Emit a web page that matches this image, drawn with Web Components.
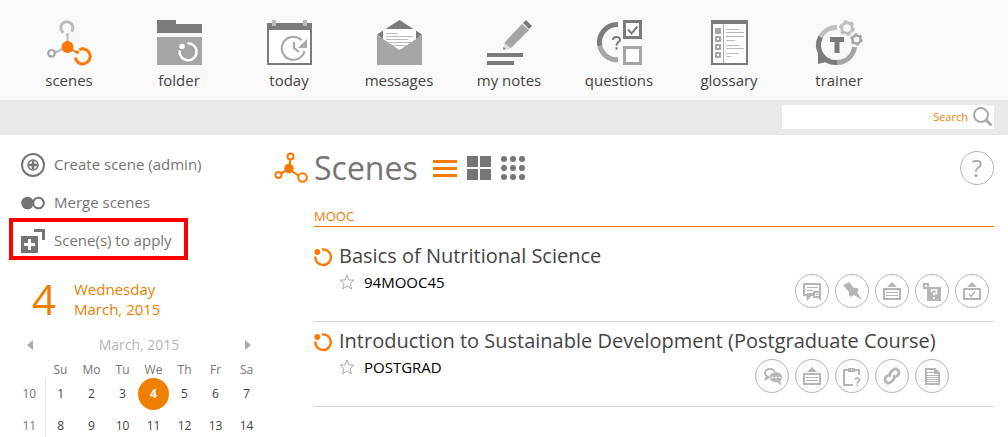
<!DOCTYPE html>
<html lang="en">
<head>
<meta charset="utf-8">
<title>Scenes</title>
<style>
  html { height: 100%; overflow: hidden; }
  body { margin: 0; min-height: 100%; background: #fff; font-family: "Open Sans", "Noto Sans", sans-serif; font-size: 15px; line-height: 20px; color: #444;
    --orange: #ee7f00; --bright: #ff7800; --grey: #757575; --pale: #b5b5b5; }
</style>
</head>
<body>
<scene-app></scene-app>
<script>
const ring = 'fill="none" stroke="#fff"';
const ICONS = {
  scenes: [44, 45, `<g fill="none"><path d="M16.5 12.7A6 6 0 1 1 24.5 11.5" stroke="#bdbdbd" stroke-width="3"/><path d="M20.5 14v8M16 29l-8 3.5" stroke="#bdbdbd" stroke-width="2"/><circle cx="4.5" cy="33.3" r="3.3" stroke="#a6a6a6" stroke-width="2.2"/><path d="M32.3 29.7A7.5 7.5 0 1 1 28.3 37.5" stroke="#ff7800" stroke-width="3"/><path d="M22 28l8 4.5" stroke="#ff7800" stroke-width="2"/></g><circle cx="20.5" cy="14.5" r="1.5" fill="#bdbdbd"/><circle cx="8.5" cy="32" r="1.3" fill="#a6a6a6"/><circle cx="20.5" cy="27" r="6" fill="#ff7800"/><circle cx="30.3" cy="32.3" r="1.8" fill="#ff7800"/>`],
  folder: [44, 45, `<path d="M0 0h19v4h26v9H0z" fill="#7b7b7b"/><path d="M0 17h45v28H0z" fill="#a5a5a5"/><path d="M30.5 23.3A8.5 8.5 0 1 1 22.6 30.5" ${ring} stroke-width="2.5"/><circle cx="25" cy="26.5" r="2.8" fill="#fff"/>`],
  today: [44, 45, `<path d="M1 4h43v40H1z" fill="#fff" stroke="#7b7b7b" stroke-width="2"/><path d="M0 3h45v7H0z" fill="#7b7b7b"/><path d="M5 0h4v6H5zM36 0h4v6h-4z" fill="#bbb"/><path d="M37.5 31A11.5 11.5 0 1 1 34.5 20.2M27 22v6l5 4" fill="none" stroke="#aaa" stroke-width="2.2"/><path d="M40 19v9h-9z" fill="#aaa"/>`],
  messages: [44, 45, `<path d="M22.5 0L45 14.5 38 20H7L0 14.5z" fill="#7b7b7b"/><path d="M6 9h33v21H6z" fill="#fff"/><path d="M0 15l22.5 15L45 15v30H0z" fill="#a5a5a5"/><path d="M9 13.5h12M9 16.5h27M9 19.5h22M11 22.5h24M15 25.5h16" stroke="#bbb"/>`],
  notes: [44, 45, `<path d="M0 33h36v4H0zM0 41h27v4H0z" fill="#7b7b7b"/><path d="M18 22L35 4l7 6-18 18-7 2z" fill="#a5a5a5"/><path d="M36 3l3-3 6 6-3 3z" fill="#7b7b7b"/><path d="M17.5 23l6 5-6.5 2z" fill="#ddd"/><path d="M16.500 27l2 2-2.500.5z" fill="#777"/>`],
  questions: [44, 45, `<path d="M21 4.5A18 18 0 0 0 2.8 26" fill="none" stroke="#7b7b7b" stroke-width="5"/><path d="M2.8 26A18 18 0 0 0 21 39.8" fill="none" stroke="#a5a5a5" stroke-width="5"/><path d="M16 20c0-4.200 7-4 7-.3 0 2.500-3.500 2.300-3.500 5.800M19.500 27.300v2.400" fill="none" stroke="#7b7b7b" stroke-width="2"/><path d="M27.5 1.5h16v16h-16z" fill="#fff" stroke="#7b7b7b" stroke-width="3"/><path d="M31 9.500l3.500 4 6-7" fill="none" stroke="#7b7b7b" stroke-width="2"/><path d="M27.5 27.5h16v16h-16z" fill="#fff" stroke="#a5a5a5" stroke-width="3"/>`],
  glossary: [44, 45, `<path d="M5 1h35v43H5z" fill="#fff" stroke="#7b7b7b" stroke-width="2"/><path d="M4 0h37v4H4z" fill="#7b7b7b"/><path d="M16.5 4v39" stroke="#aaa"/><path d="M8 8h6v6H8z" fill="#a5a5a5"/><path d="M9 17h4v4H9zM9 25h4v4H9zM9 33h4v4H9z" fill="none" stroke="#a5a5a5" stroke-width="2"/><path d="M19 9.5h13M19 12.5h18M19 16.5h18M19 20.5h9M19 25.5h13M19 28.5h18M19 33.5h13M19 36.5h5" stroke="#bbb"/>`],
  trainer: [44, 45, `<g fill="none" stroke-width="5"><path d="M20 7.5A17.5 17.5 0 0 0 3.5 17" stroke="#bfbfbf"/><path d="M3.5 17A17.5 17.5 0 0 0 20 42.5" stroke="#7b7b7b"/><path d="M20 42.5A17.5 17.5 0 0 0 37.5 27" stroke="#a5a5a5"/></g><path d="M1 32v12l12-3z" fill="#7b7b7b"/><path d="M13 17h14v5h-4.500v11h-5V22H13z" fill="#7b7b7b"/><circle cx="30" cy="8" r="5.300" fill="none" stroke="#bfbfbf" stroke-width="3"/><circle cx="30" cy="8" r="7" fill="none" stroke="#bfbfbf" stroke-width="2" stroke-dasharray="3.600 3.730"/><circle cx="39.5" cy="19.5" r="4" fill="none" stroke="#a5a5a5" stroke-width="2.400"/><circle cx="39.5" cy="19.5" r="5.500" fill="none" stroke="#a5a5a5" stroke-width="1.600" stroke-dasharray="2.900 2.860"/>`],
  search: [20, 20, `<circle cx="8" cy="8" r="7" fill="none" stroke="#aaa" stroke-width="2"/><path d="M12.5 12.5l6 6" stroke="#aaa" stroke-width="3"/>`],
  create: [24, 24, `<circle cx="12" cy="12" r="11" fill="none" stroke="#757575" stroke-width="2"/><circle cx="12" cy="12" r="5" fill="none" stroke="#757575" stroke-width="1.500"/><path d="M12 8v8M8 12h8" stroke="#757575" stroke-width="2.500"/>`],
  merge: [24, 24, `<circle cx="6.5" cy="12" r="6.300" fill="#757575"/><circle cx="17.5" cy="12" r="5.300" fill="#fff" stroke="#757575" stroke-width="2"/>`],
  apply: [24, 24, `<path d="M0 7h17v17H0zM13 0h11v11h-3V3h-8z" fill="#757575"/><path d="M8.5 10v11M3 15.500h11" stroke="#fff" stroke-width="3"/>`],
  logo: [34, 30, `<path d="M16 3v13M15 16L4 22M15 16l13 9" stroke="#ff7800" stroke-width="2"/><circle cx="15" cy="15.500" r="4.800" fill="#ff7800"/><g fill="#fff" stroke="#ff7800" stroke-width="2"><circle cx="16.500" cy="3.500" r="3"/><circle cx="4.500" cy="22" r="3"/><circle cx="28.500" cy="24.500" r="4.300"/></g>`],
  list: [24, 24, `<path d="M0 4h24v3H0zM0 11h24v3H0zM0 18h24v3H0z" fill="#ee7f00"/>`],
  grid: [24, 24, `<path d="M0 0h11v11H0zM13 0h11v11H13zM0 13h11v11H0zM13 13h11v11H13z" fill="#757575"/>`],
  dots: [24, 24, [3, 12, 21].map(y => [3, 12, 21].map(x => `<circle cx="${x}" cy="${y}" r="3" fill="#757575"/>`).join('')).join('')],
  status: [18, 18, `<path d="M8 1.500A7.800 7.800 0 1 1 1.300 8.500" fill="none" stroke="#ff7800" stroke-width="2.400"/><circle cx="3.300" cy="4" r="2.900" fill="#ff7800"/>`],
  star: [16, 16, `<path d="M8 1l1.900 5H15l-4 3.600 1.600 5.400L8 11.900 3.400 15 5 9.600 1 6h5.100z" fill="none" stroke="#aaa"/>`],
  prev: [6, 10, `<path d="M6 0v10L0 5z" fill="#aaa"/>`],
  next: [6, 10, `<path d="M0 0v10l6-5z" fill="#aaa"/>`],
  forum: [34, 34, `<path d="M25 17v-7H9v11h9" fill="none" stroke="#b5b5b5" stroke-width="2"/><path d="M12 13.500h11M12 16.500h6M12 19.500h6" stroke="#b5b5b5"/><path d="M11 21h6l-5 6zM22 23h4v4z" fill="#b5b5b5"/><path d="M19 18h6v5h-6z" fill="#fff" stroke="#b5b5b5" stroke-width="2"/><path d="M21 20.500h3" stroke="#b5b5b5"/>`],
  pin: [34, 34, `<path d="M8 11l6-3 5 6 3 0 2 2-2 2 5 8-8-5-3 2-2-2 0-3z" fill="#b5b5b5"/>`],
  board: [34, 34, `<path d="M9 15h16v10H9z" fill="none" stroke="#b5b5b5" stroke-width="2"/><path d="M11 18.500h12M11 21.500h12" stroke="#b5b5b5"/><path d="M12 13l5-5 5 5z" fill="#b5b5b5"/>`],
  quiz: [34, 34, `<path d="M12 13h14v14H12z" fill="#b5b5b5"/><path d="M9 10h4v4H9z" fill="#fff" stroke="#b5b5b5" stroke-width="2"/><path d="M16.500 18v-2h5v3.500H19v2M19 23v2" fill="none" stroke="#fff" stroke-width="1.600"/>`],
  check: [34, 34, `<path d="M9 15h16v10H9z" fill="none" stroke="#b5b5b5" stroke-width="2"/><path d="M14 20l2 2.500 4-5" fill="none" stroke="#b5b5b5" stroke-width="1.500"/><path d="M12 13l5-5 5 5z" fill="#b5b5b5"/>`],
  chat: [34, 34, `<ellipse cx="15" cy="14" rx="5" ry="4" fill="none" stroke="#b5b5b5" stroke-width="2"/><path d="M9 22l2-5 4 2z" fill="#b5b5b5"/><path d="M21 13c4 0 6.500 2.500 6.500 5 0 2-1 3.500-2 4l1.500 5-5-3.500c-5 0-7.500-2.500-7.500-5.500s3-5 6.500-5z" fill="#b5b5b5" stroke="#fff" stroke-width=".6"/><path d="M16.500 18.500h9" stroke="#fff" stroke-width="1.500" stroke-dasharray="2 1.500"/>`],
  task: [34, 34, `<path d="M18 26H9V11h15v5" fill="none" stroke="#b5b5b5" stroke-width="2"/><path d="M13 9h7v4h-7z" fill="#b5b5b5"/><path d="M16 10.500h1" stroke="#fff"/><path d="M20 20.500c.5-2 4.500-2 4.500.3 0 1.700-2.300 1.700-2.300 3.700M22.200 25.500v1.800" fill="none" stroke="#b5b5b5" stroke-width="1.700"/>`],
  link: [34, 34, `<g transform="rotate(-45 17 17)" fill="none" stroke="#b5b5b5" stroke-width="2.800"><path d="M15 13.500h-3a3.500 3.500 0 0 0 0 7h3.500a3.500 3.500 0 0 0 3.300-3"/><path d="M19 20.500h3a3.500 3.500 0 0 0 0-7h-3.500a3.500 3.500 0 0 0-3.300 3"/></g>`],
  page: [34, 34, `<path d="M11 10h9l4 4v11H11z" fill="#fff" stroke="#b5b5b5" stroke-width="2"/><path d="M19 9v6h6z" fill="#b5b5b5"/><path d="M12 13.500h7M12 16.500h11M12 18.500h11M12 20.500h11M12 22.500h11" stroke="#b5b5b5"/>`]
};
const root = (el, html) => { el.attachShadow({ mode: 'open' }).innerHTML = html; };
const attr = (el, name) => el.getAttribute(name) || '';

customElements.define('ui-icon', class extends HTMLElement {
  connectedCallback() {
    if (this.shadowRoot) return;
    const [w, h, art] = ICONS[attr(this, 'name')];
    root(this, `<style>:host{display:block;flex:none}svg{display:block;overflow:visible}</style>
      <svg width="${w}" height="${h}" viewBox="0 0 ${w} ${h}" aria-hidden="true">${art}</svg>`);
  }
});

customElements.define('nav-item', class extends HTMLElement {
  connectedCallback() {
    root(this, `<style>
      :host{display:block;width:110px}
      a{display:flex;flex-direction:column;align-items:center;gap:5px;color:inherit;text-decoration:none}
      </style><a href="#"><ui-icon name="${attr(this, 'icon')}"></ui-icon><span><slot></slot></span></a>`);
  }
});

customElements.define('search-bar', class extends HTMLElement {
  connectedCallback() {
    root(this, `<style>
      :host{display:flex;justify-content:flex-end;background:#e9e9e9;padding:5px 14px 6px}
      form{display:flex;align-items:center;gap:5px;box-sizing:border-box;width:212px;height:24px;background:#fff;padding-right:1px}
      input{flex:1;min-width:0;border:0;padding:0 0 0 6px;background:none;outline:0;text-align:right;font:11px/20px "Open Sans",sans-serif;color:var(--orange)}
      input::placeholder{color:var(--orange);opacity:1}
      button{border:0;padding:0;background:none}
      </style><form><input type="text" placeholder="Search" aria-label="Search"><button type="button" aria-label="Start search"><ui-icon name="search"></ui-icon></button></form>`);
  }
});

customElements.define('side-link', class extends HTMLElement {
  connectedCallback() {
    root(this, `<style>
      :host{display:flex;height:38px;color:var(--grey)}
      a{position:relative;display:flex;align-items:center;gap:9px;color:inherit;text-decoration:none}
      span{padding-bottom:2px}
      :host([marked]) a::before{content:"";position:absolute;inset:-4px -16px 0 -12px;border:4px solid #f00}
      </style><a href="#"><ui-icon name="${attr(this, 'icon')}"></ui-icon><span><slot></slot></span></a>`);
  }
});

customElements.define('month-calendar', class extends HTMLElement {
  connectedCallback() {
    const rows = [[10, 1, 2, 3, 4, 5, 6, 7], [11, 8, 9, 10, 11, 12, 13, 14]];
    root(this, `<style>
      :host{display:block;width:248px}
      .today{display:flex;align-items:center;gap:18px;padding-left:18px;color:var(--orange)}
      .day{font-size:42px;line-height:40px}
      .month{display:flex;justify-content:space-between;align-items:center;padding:0 11px 0 13px;margin-top:16px;color:var(--pale);font-size:14px}
      button{border:0;padding:0;background:none}
      table{table-layout:fixed;width:100%;border-collapse:collapse;margin-top:7px;font-size:12px;line-height:16px;text-align:center}
      th,td{padding:0;font-weight:400;height:32px}
      thead th,thead td{height:16px;color:var(--grey)}
      tbody th{color:var(--grey)}
      tbody td:nth-child(2){border-left:1px solid #e4e4e4}
      .now span{display:flex;align-items:center;justify-content:center;height:32px;border-radius:50%;background:var(--orange);color:#fff;font-weight:700}
      </style>
      <div class="today"><span class="day">4</span><span>Wednesday<br>March, 2015</span></div>
      <div class="month"><button type="button" aria-label="Previous month"><ui-icon name="prev"></ui-icon></button><span>March, 2015</span><button type="button" aria-label="Next month"><ui-icon name="next"></ui-icon></button></div>
      <table><thead><tr><td></td>${['Su', 'Mo', 'Tu', 'We', 'Th', 'Fr', 'Sa'].map(d => `<th>${d}</th>`).join('')}</tr></thead>
      <tbody>${rows.map(([w, ...days]) => `<tr><th>${w}</th>${days.map(d => `<td${d === 4 ? ' class="now"' : ''}><span>${d}</span></td>`).join('')}</tr>`).join('')}</tbody></table>`);
  }
});

customElements.define('round-button', class extends HTMLElement {
  connectedCallback() {
    root(this, `<style>
      :host{display:block}
      button{display:flex;align-items:center;justify-content:center;box-sizing:border-box;width:34px;height:34px;padding:0;border:1px solid var(--pale);border-radius:50%;background:#fff;color:#aaa;font:24px/32px "Open Sans",sans-serif}
      </style><button type="button" aria-label="${attr(this, 'label')}"><slot></slot></button>`);
  }
});

customElements.define('course-row', class extends HTMLElement {
  connectedCallback() {
    root(this, `<style>
      :host{display:grid;grid-template-columns:25px 1fr auto;grid-template-rows:28px 1fr;box-sizing:border-box;height:85px;padding:5px 5px 0 0;border-bottom:1px solid #d3d3d3}
      ui-icon[name=status]{margin-top:6px}
      a{grid-column:2 / 4;color:#444;text-decoration:none;font-size:20px;line-height:28px;white-space:nowrap}
      .code{grid-column:2;display:flex;align-items:center;gap:9px;height:24px;color:#000;font-size:15px}
      .tools{grid-column:3;display:flex;gap:6px;padding-top:4px}
      :host([spare]) .tools{padding-right:40px}
      .code button{border:0;padding:0;background:none}
      </style><ui-icon name="status"></ui-icon><a href="#"><slot></slot></a>
      <div class="code"><button type="button" aria-label="Favourite"><ui-icon name="star"></ui-icon></button><span>${attr(this, 'code')}</span></div>
      <div class="tools">${attr(this, 'tools').split(' ').map(t => `<round-button label="${t}"><ui-icon name="${t}"></ui-icon></round-button>`).join('')}</div>`);
  }
});

customElements.define('scene-app', class extends HTMLElement {
  connectedCallback() {
    root(this, `<style>
      :host{display:block}
      nav{display:flex;box-sizing:border-box;height:100px;padding:20px 14px 0;background:#f9f9f9}
      .page{display:grid;grid-template-columns:260px 1fr;gap:14px;padding-right:14px}
      aside{padding:11px 0 0 14px}
      .links{padding-left:7px}
      month-calendar{margin-top:19px}
      main{padding-top:15px}
      .head{display:flex;align-items:center;height:36px}
      h1{margin:0 15px 0 6px;font-size:32px;line-height:36px;font-weight:400;color:var(--grey)}
      .views{display:flex;gap:10px;flex:1}
      .views button{border:0;padding:0;background:none}
      section{padding-left:40px}
      h2{margin:20px 0 10px;border-bottom:1px solid var(--orange);color:var(--orange);font-size:13px;line-height:20px;font-weight:400}
      </style>
      <nav><nav-item icon="scenes">scenes</nav-item><nav-item icon="folder">folder</nav-item><nav-item icon="today">today</nav-item><nav-item icon="messages">messages</nav-item><nav-item icon="notes">my notes</nav-item><nav-item icon="questions">questions</nav-item><nav-item icon="glossary">glossary</nav-item><nav-item icon="trainer">trainer</nav-item></nav>
      <search-bar></search-bar>
      <div class="page">
        <aside>
          <div class="links"><side-link icon="create">Create scene (admin)</side-link><side-link icon="merge">Merge scenes</side-link><side-link icon="apply" marked>Scene(s) to apply</side-link></div>
          <month-calendar></month-calendar>
        </aside>
        <main>
          <div class="head"><ui-icon name="logo"></ui-icon><h1>Scenes</h1>
            <div class="views"><button type="button" aria-label="List"><ui-icon name="list"></ui-icon></button><button type="button" aria-label="Tiles"><ui-icon name="grid"></ui-icon></button><button type="button" aria-label="Icons"><ui-icon name="dots"></ui-icon></button></div>
            <round-button label="Help">?</round-button></div>
          <section><h2>MOOC</h2>
            <course-row code="94MOOC45" tools="forum pin board quiz check">Basics of Nutritional Science</course-row>
            <course-row code="POSTGRAD" tools="chat board task link page" spare>Introduction to Sustainable Development (Postgraduate Course)</course-row>
          </section>
        </main>
      </div>`);
  }
});
</script>
</body>
</html>
